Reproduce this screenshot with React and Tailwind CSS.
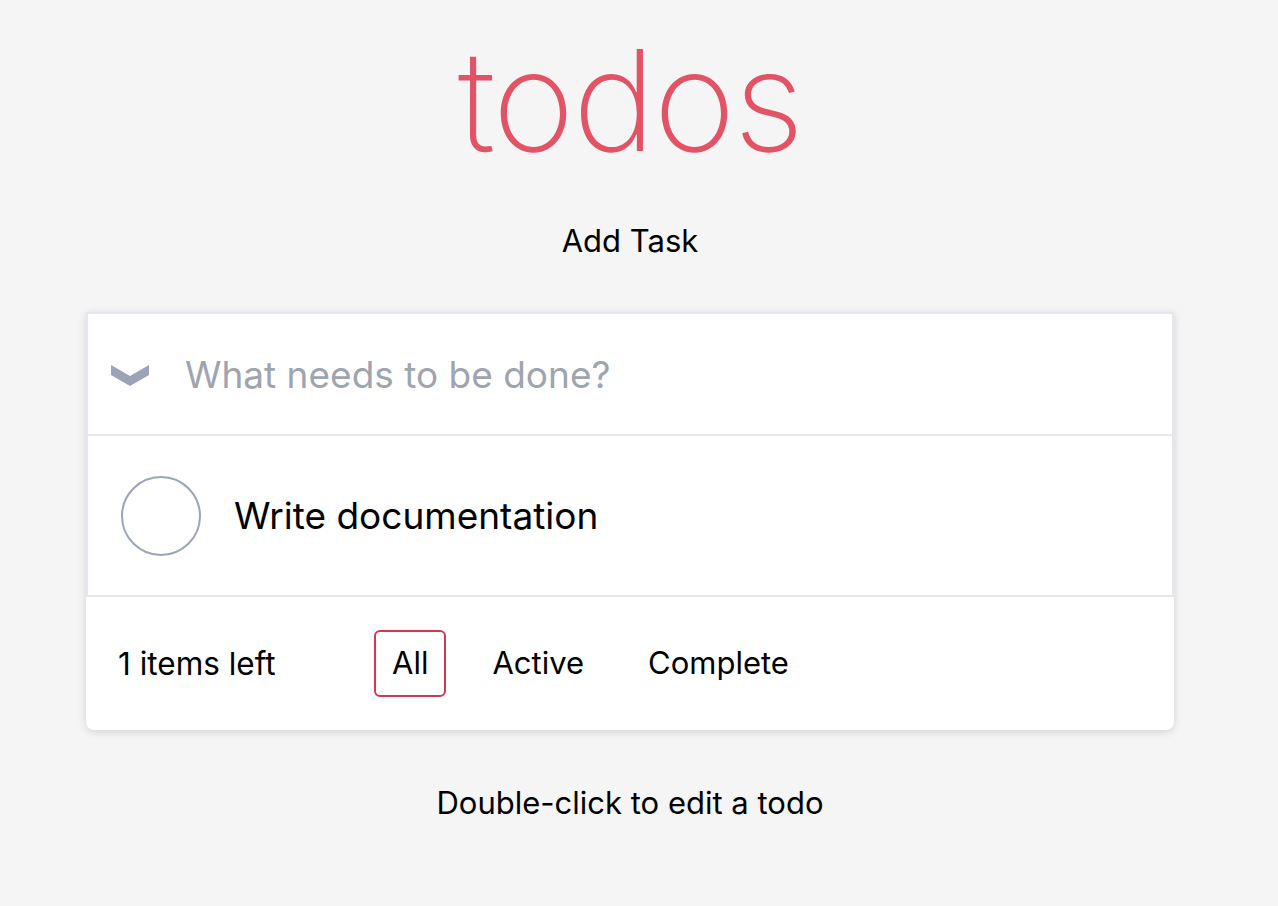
import React from "react";

export default function App() {
  return (
    <div className="min-h-[906px] w-full bg-[#f5f5f5]" style={{ fontFamily: "Inter, 'Liberation Sans', sans-serif" }}>
      <div className="w-[1260px] flex flex-col items-center">
        <h1 className="mt-[30px] h-[140px] text-[140px] leading-[140px] font-extralight text-[#e25366] tracking-[-2px]">
          todos
        </h1>
        <div className="mt-[51px] h-[40px] text-[31px] leading-[40px] text-black">Add Task</div>
        <div className="mt-[51px] w-[1088px] rounded-b-lg bg-white shadow-[0_2px_8px_rgba(0,0,0,0.14)]">
          <div className="flex h-[124px] items-center border-2 border-[#e6e6ee] bg-white">
            <svg width="38" height="21" viewBox="0 0 38 21" className="ml-[23px] mt-[2px] shrink-0">
              <polygon points="0,0 19,11 38,0 38,10 19,21 0,10" fill="#9ba4b6" />
            </svg>
            <div className="ml-[36px] text-[37px] leading-none text-[#9ea4b0]">What needs to be done?</div>
          </div>
          <div className="flex h-[161px] items-center border-x-2 border-b-2 border-[#e6e6ee] bg-white">
            <div className="ml-[33px] h-[80px] w-[80px] shrink-0 rounded-full border-2 border-[#9aa5b9]" />
            <div className="ml-[33px] text-[37px] leading-none text-black">Write documentation</div>
          </div>
          <div className="flex h-[133px] items-center pl-[32px]">
            <div className="w-[256px] text-[31.5px] leading-none text-black">1 items left</div>
            <div className="flex items-center gap-[28px]">
              <div className="flex h-[67px] items-center rounded-md border-2 border-[#d2394f] px-[16px] text-[31px] text-black">All</div>
              <div className="flex h-[67px] items-center rounded-md border-2 border-transparent px-[16px] text-[31px] text-black">Active</div>
              <div className="flex h-[67px] items-center rounded-md border-2 border-transparent px-[16px] text-[31px] text-black">Complete</div>
            </div>
          </div>
        </div>
        <div className="mt-[53px] h-[40px] text-[31px] leading-[40px] text-black">Double-click to edit a todo</div>
      </div>
    </div>
  );
}
